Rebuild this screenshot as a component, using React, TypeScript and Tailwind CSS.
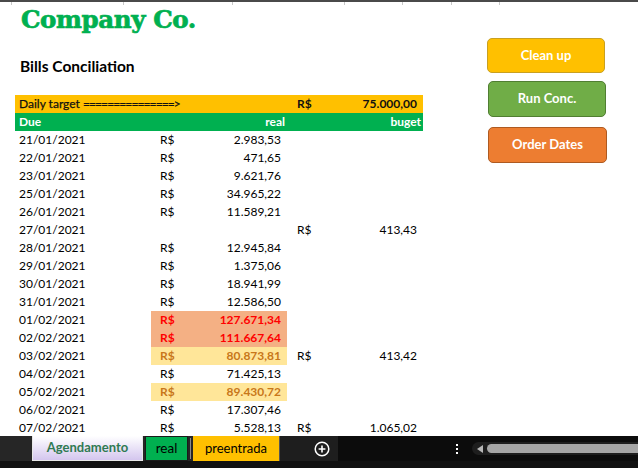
import React from "react";

type R = { d: string; b?: string; c?: string; hl?: "red" | "yel" };

const rows: R[] = [
  { d: "21/01/2021", b: "2.983,53" },
  { d: "22/01/2021", b: "471,65" },
  { d: "23/01/2021", b: "9.621,76" },
  { d: "25/01/2021", b: "34.965,22" },
  { d: "26/01/2021", b: "11.589,21" },
  { d: "27/01/2021", c: "413,43" },
  { d: "28/01/2021", b: "12.945,84" },
  { d: "29/01/2021", b: "1.375,06" },
  { d: "30/01/2021", b: "18.941,99" },
  { d: "31/01/2021", b: "12.586,50" },
  { d: "01/02/2021", b: "127.671,34", hl: "red" },
  { d: "02/02/2021", b: "111.667,64", hl: "red" },
  { d: "03/02/2021", b: "80.873,81", c: "413,42", hl: "yel" },
  { d: "04/02/2021", b: "71.425,13" },
  { d: "05/02/2021", b: "89.430,72", hl: "yel" },
  { d: "06/02/2021", b: "17.307,46" },
  { d: "07/02/2021", b: "5.528,13", c: "1.065,02" },
];

function Row({ r }: { r: R }) {
  const bCls =
    r.hl === "red"
      ? "bg-[#F4B084] text-[#FF0000] font-bold"
      : r.hl === "yel"
      ? "bg-[#FFE699] text-[#C8771A] font-bold"
      : "";
  return (
    <div className="flex h-[18px] items-center">
      <div className="w-[136px] pl-[4px]">{r.d}</div>
      <div className={`w-[136px] h-full flex items-center justify-between pl-[9px] pr-[6px] ${bCls}`}>
        {r.b && (
          <>
            <span>R$</span>
            <span>{r.b}</span>
          </>
        )}
      </div>
      <div className="w-[136px] h-full flex items-center justify-between pl-[10px] pr-[6px]">
        {r.c && (
          <>
            <span>R$</span>
            <span>{r.c}</span>
          </>
        )}
      </div>
    </div>
  );
}

export default function App() {
  const body = { fontFamily: "Lato, 'Noto Sans', sans-serif" };
  return (
    <div className="w-[638px] h-[468px] flex flex-col bg-white overflow-hidden text-[12px] text-black" style={body}>
      <div className="flex-1 overflow-hidden flex flex-col">
        <div className="h-[2px] bg-[#4a4a4a] shrink-0" />
        <div className="flex h-[0px] shrink-0">
          <div className="w-[12px] h-[3px] border-r border-[#c8c8c8]" />
          <div className="w-[112px] h-[3px] border-r border-[#c8c8c8]" />
          <div className="w-[109px] h-[3px] border-r border-[#c8c8c8]" />
          <div className="w-[112px] h-[3px] border-r border-[#c8c8c8]" />
          <div className="w-[58px] h-[3px] border-r border-[#c8c8c8]" />
          <div className="w-[49px] h-[3px] border-r border-[#c8c8c8]" />
          <div className="w-[48px] h-[3px] border-r border-[#c8c8c8]" />
        </div>
        <div className="flex">
          <div className="w-[423px] pl-[15px] shrink-0">
            <div
              className="h-[36px] leading-[36px] text-[24.5px] font-bold text-[#00B050] pl-[6px] tracking-[-0.4px]"
              style={{ fontFamily: "'DejaVu Serif', serif", WebkitTextStroke: "0.7px #00B050" }}
            >
              Company Co.
            </div>
            <div className="h-[57px] pt-[18px] pl-[5px] text-[15.5px] font-bold leading-[20px]">
              Bills Conciliation
            </div>
            <div className="flex h-[18px] items-center bg-[#FFC000] text-[#111]">
              <div className="w-[272px] pl-[4px]" style={{ WebkitTextStroke: "0.25px #111" }}>
                Daily target <span className="tracking-[-0.9px]">===============</span>&gt;
              </div>
              <div className="w-[136px] flex justify-between pl-[10px] pr-[6px] font-bold">
                <span>R$</span>
                <span>75.000,00</span>
              </div>
            </div>
            <div className="flex h-[18px] items-center bg-[#00B050] font-bold text-white">
              <div className="w-[136px] pl-[4px]">Due</div>
              <div className="w-[136px] text-right pr-[2px]">real</div>
              <div className="w-[136px] text-right pr-[2px]">buget</div>
            </div>
            {rows.map((r) => (
              <Row key={r.d} r={r} />
            ))}
          </div>
          <div className="ml-[64px] pt-[36px] flex flex-col text-white font-bold text-[13px]">
            <div className="w-[118px] h-[35px] rounded-[5px] bg-[#FFC000] border border-[#C9A020] flex items-center justify-center">
              Clean up
            </div>
            <div className="mt-[8px] ml-[1px] w-[118px] h-[36px] rounded-[5px] bg-[#70AD47] border border-[#507E32] flex items-center justify-center">
              Run Conc.
            </div>
            <div className="mt-[10px] ml-[1px] w-[119px] h-[36px] rounded-[5px] bg-[#ED7D31] border border-[#AE5A21] flex items-center justify-center">
              Order Dates
            </div>
          </div>
        </div>
      </div>
      <div className="h-[32px] shrink-0 flex flex-col">
        <div className="h-[25px] flex bg-[#262626]">
          <div className="w-[32px]" />
          <div className="w-[111px] h-full bg-gradient-to-b from-white to-[#d4c6ee] border-x border-b border-[#e8e8e8] flex items-center justify-center font-bold text-[13px] text-[#2F7A52]">
            Agendamento
          </div>
          <div className="w-[2px]" />
          <div className="w-[43px] h-full bg-[#00B050] border border-[#1a1a1a] flex items-center justify-center text-[13.5px]">
            real
          </div>
          <div className="w-[5px] flex justify-center py-[2px]">
            <div className="w-[1px] h-full bg-[#8a8a8a]" />
          </div>
          <div className="w-[86px] h-full bg-[#FFC000] flex items-center justify-center text-[13px]">
            preentrada
          </div>
          <div className="w-[59px] h-full bg-[#1e1e1e] border-l border-[#555] flex items-center justify-end pr-[8px]">
            <svg width="16" height="16" viewBox="0 0 16 16">
              <circle cx="8" cy="8" r="6.8" fill="none" stroke="#fff" strokeWidth="1.5" />
              <path d="M8 4.6v6.8M4.6 8h6.8" stroke="#fff" strokeWidth="1.6" />
            </svg>
          </div>
          <div className="flex-1 h-full bg-[#0c0c0c] flex items-center">
            <div className="ml-[118px] w-[2px] flex flex-col gap-[2px]">
              <div className="w-[2px] h-[2px] bg-white" />
              <div className="w-[2px] h-[2px] bg-white" />
              <div className="w-[2px] h-[2px] bg-white" />
            </div>
            <div className="ml-[14px] flex-1 h-[13px] bg-[#1e1e1e] rounded-l-full flex items-center pl-[5px]">
              <svg width="6" height="8" viewBox="0 0 6 8">
                <path d="M6 0L0 4l6 4z" fill="#b8b8b8" />
              </svg>
              <div className="ml-[4px] flex-1 h-[9px] bg-[#a6a6a6] rounded-l-full" />
            </div>
          </div>
        </div>
        <div className="flex-1 bg-[#111]" />
      </div>
    </div>
  );
}
